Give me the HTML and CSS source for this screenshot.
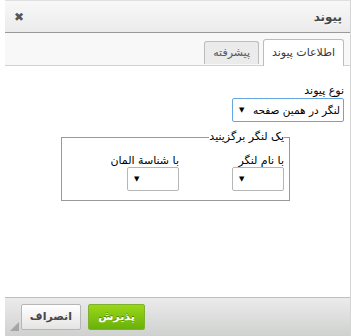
FILE: index.html
```html
<!DOCTYPE html>
<html lang="fa" dir="rtl">
<head>
    <meta charset="UTF-8">
    <title>پیوند</title>
    <link rel="stylesheet" href="styles.css">
</head>
<body>
    <div class="dialog">
        <div class="dialog-title">
            <span class="title-text">پیوند</span>
            <span class="close">&#x2716;</span>
        </div>
        <div class="tabs">
            <span class="tab active">اطلاعات پیوند</span>
            <span class="tab">پیشرفته</span>
        </div>
        <div class="dialog-body">
            <div class="field">
                <label class="label">نوع پیوند</label>
                <div class="select wide focused">
                    <span>لنگر در همین صفحه</span>
                    <span class="arrow">&#9660;</span>
                </div>
            </div>
            <fieldset class="group">
                <legend>یک لنگر برگزینید</legend>
                <div class="cols">
                    <div class="col">
                        <label class="label">با نام لنگر</label>
                        <div class="select small"><span class="arrow">&#9660;</span></div>
                    </div>
                    <div class="col">
                        <label class="label">با شناسة المان</label>
                        <div class="select small"><span class="arrow">&#9660;</span></div>
                    </div>
                </div>
            </fieldset>
        </div>
        <div class="dialog-footer">
            <span class="btn ok">پذیرش</span>
            <span class="btn cancel">انصراف</span>
            <span class="grip"></span>
        </div>
    </div>
</body>
</html>
```

FILE: styles.css
```css
body {
    margin: 0;
    background: #fff;
    font-family: 'DejaVu Sans', sans-serif;
    font-size: 11px;
    color: #000;
}

.dialog {
    width: 346px;
    height: 336px;
    border-right: 1px solid #d4d4d4;
    display: flex;
    flex-direction: column;
    box-sizing: border-box;
    position: relative;
}

.dialog-title {
    height: 33px;
    box-sizing: border-box;
    background: linear-gradient(#f8f8f8, #ebebeb);
    border-bottom: 1px solid #999;
    border-top: 1px solid #e0e0e0;
    display: flex;
    align-items: center;
    justify-content: space-between;
    padding: 0 8px 0 9px;
}

.title-text {
    font-weight: bold;
    font-size: 12px;
    color: #474747;
    text-shadow: 0 1px 0 #fff;
}

.close {
    font-size: 12px;
    color: #555;
}

.tabs {
    height: 33px;
    box-sizing: border-box;
    background: #f8f8f8;
    border-bottom: 1px solid #d1d1d1;
    display: flex;
    align-items: flex-end;
    gap: 4px;
    padding: 0 6px;
}

.tab {
    height: 22px;
    line-height: 22px;
    padding: 0 8px;
    background: #ebebeb;
    border: 1px solid #bcbcbc;
    border-bottom: none;
    color: #595959;
    border-radius: 3px 3px 0 0;
    margin-bottom: 1px;
}

.tab.active {
    height: 26px;
    line-height: 26px;
    background: #fff;
    color: #383838;
    margin-bottom: -1px;
}

.dialog-body {
    flex: 1;
    background: #fff;
    padding: 18px 6px 0 0;
}

.field {
    display: flex;
    flex-direction: column;
    align-items: flex-start;
}

.label {
    display: block;
    line-height: 13px;
    margin-bottom: 1px;
}

.select {
    box-sizing: border-box;
    height: 24px;
    border: 1px solid #b6b6b6;
    border-radius: 2px;
    background: #fff;
    display: flex;
    align-items: center;
    justify-content: space-between;
    padding: 0 3px 0 6px;
}

.select.wide {
    width: 112px;
    font-size: 10.5px;
}

.select.focused {
    border-color: #66a6de;
}

.select.small {
    width: 52px;
    justify-content: flex-end;
}

.arrow {
    font-size: 7px;
}

.group {
    width: 229px;
    box-sizing: border-box;
    margin: 9px 54px 0 0;
    padding: 0 5px 9px 10px;
    border: 1px solid #999;
}

.group legend {
    padding: 0;
    line-height: 12px;
}

.cols {
    display: flex;
    gap: 53px;
    padding-top: 11px;
}

.col {
    display: flex;
    flex-direction: column;
    align-items: flex-start;
}

.col .label {
    margin-bottom: 0;
}

.dialog-footer {
    height: 39px;
    box-sizing: border-box;
    border-top: 1px solid #bfbfbf;
    background: linear-gradient(#ebebeb, #cfd1cf);
    display: flex;
    align-items: center;
    padding: 0 0 0 16px;
    justify-content: flex-end;
    gap: 7px;
}

.btn {
    box-sizing: border-box;
    height: 26px;
    line-height: 24px;
    padding: 0 8px;
    border-radius: 2px;
    font-weight: bold;
    font-size: 11px;
    text-align: center;
}

.btn.ok {
    background: linear-gradient(#9ad717, #69b10b);
    border: 1px solid #7fb130;
    color: #fff;
    text-shadow: 0 -1px 0 #55830c;
    width: 57px;
}

.btn.cancel {
    background: linear-gradient(#fff, #e4e4e4);
    border: 1px solid #b6b6b6;
    color: #474747;
    width: 60px;
}

.grip {
    position: absolute;
    left: 5px;
    bottom: 5px;
    width: 0;
    height: 0;
    border-left: 9px solid transparent;
    border-bottom: 9px solid #a5a5a5;
}
```
